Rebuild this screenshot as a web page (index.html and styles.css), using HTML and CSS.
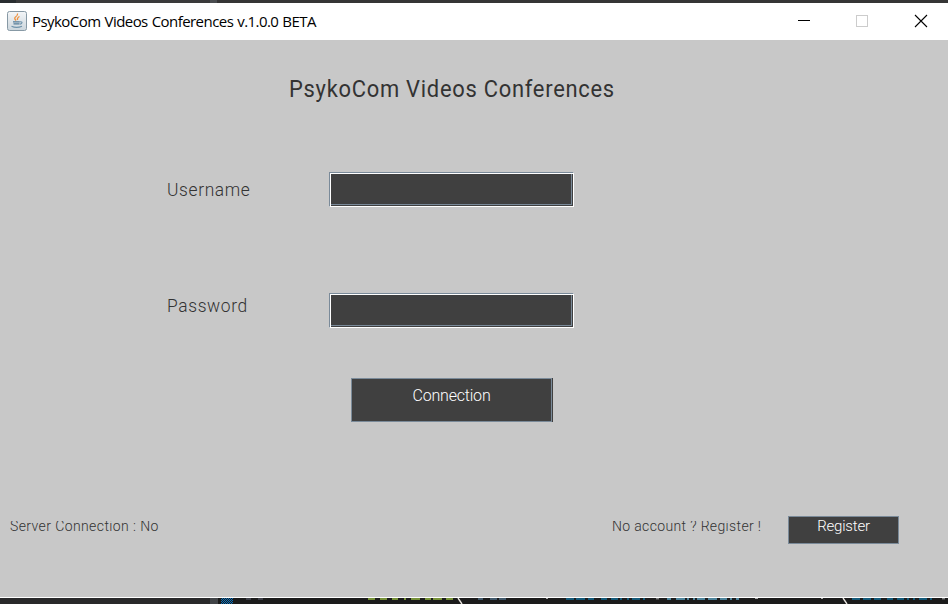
FILE: index.html
```html
<!DOCTYPE html>
<html lang="en">
<head>
<meta charset="utf-8">
<title>PsykoCom Videos Conferences</title>
<link rel="stylesheet" href="styles.css">
</head>
<body>
<div class="backdrop-top"></div>
<header class="titlebar">
  <svg class="app-icon" width="20" height="20" viewBox="0 0 20 20">
    <defs><linearGradient id="g" x1="0" y1="0" x2="0" y2="1"><stop offset="0" stop-color="#f4f6f8"/><stop offset="1" stop-color="#cbd5dc"/></linearGradient></defs>
    <rect x=".5" y=".5" width="19" height="19" rx="2" fill="url(#g)" stroke="#8799a5"/>
    <path d="M10.500 2.500Q11 4.500 8.800 5.800T9 9.500M12.500 5.500Q10 6.500 10.500 9" fill="none" stroke="#ef913d" stroke-width="1.300"/>
    <path d="M6 10.800H12.800M6.500 12.800H12.500" fill="none" stroke="#557c98" stroke-width="1.300"/>
    <path d="M13 10.800Q16 10.500 14.500 12.500L12.800 13.300M4.500 15.200Q9.500 17.500 15 15.200" fill="none" stroke="#6f93ab" stroke-width="1.200"/>
  </svg>
  <span class="window-title">PsykoCom Videos Conferences v.1.0.0 BETA</span>
  <svg class="controls" width="130" height="14" viewBox="0 0 130 14" fill="none">
    <path d="M0 10.500H12" stroke="#000"/>
    <rect x="58.500" y="5.500" width="11" height="11" stroke="#ccc"/>
    <path d="M117 5L129 17M129 5L117 17" stroke="#000" stroke-width="1.100"/>
  </svg>
</header>
<main class="content">
  <h1 class="heading">PsykoCom Videos Conferences</h1>
  <div class="row user-row"><label class="label" for="u"><span class="narrow">Username</span></label><input class="field user-field" id="u"></div>
  <div class="row pass-row"><label class="label" for="p"><span class="narrow">Password</span></label><input class="field" id="p" type="password"></div>
  <button class="connect">Connection</button>
  <footer class="footer">
    <span class="note status"><span class="note-text">Server Connection : No</span></span>
    <span class="note account"><span class="note-text">No account ? Register !</span></span>
    <button class="register">Register</button>
  </footer>
</main>
<div class="backdrop-bottom">
  <svg class="backdrop-art" width="948" height="6" viewBox="0 0 948 6" fill="none">
    <defs><pattern id="c" width="2" height="2" patternUnits="userSpaceOnUse"><path d="M0 .5H1M1 1.500H2" stroke="#0870bd"/></pattern></defs>
    <rect width="218" height="6" fill="#29292a"/><rect x="210" width="8" height="6" fill="#414447"/>
    <rect x="221" width="12" height="6" fill="url(#c)"/>
    <path d="M246 1h5M258 1h5" stroke="#606575"/>
    <path d="M368 1h7M380 1h7M392 1h6M404 1h2M411 1h9M425 1h6M433 1h9M446 1h7" stroke="#95b943" stroke-width="1.500"/>
    <path d="M458 0L462 6M843 0L847 6" stroke="#e8e4df" stroke-width="1.400"/>
    <path d="M478 1h5M490 1h7M499 1h7" stroke="#506f86" stroke-width="1.400"/>
    <path d="M566 1h8M576 1h9M588 1h6M601 1h6M611 1h7M620 1h2M627 1h2M632 1h8M643 1h2M852 1h8M863 1h8M874 1h7M887 1h6M897 1h7M907 1h2M913 1h2M919 1h8M930 1h2" stroke="#147099" stroke-width="1.600"/>
    <path d="M667 1h4M676 1h9M687 1h2M693 1h2M697 1h8M708 1h9M720 1h7M730 1h2M736 1h3" stroke="#60a7c5" stroke-width="1.600"/>
    <path d="M546 .5h2M656 .8h3M755 .5h3M821 .5h2M942 .8h3" stroke="#aaa"/>
  </svg>
</div>
</body>
</html>
```
FILE: styles.css
```css
* { box-sizing: border-box; }
body {
  margin: 0;
  width: 948px;
  height: 604px;
  overflow: hidden;
  background: #c8c8c8;
  font-family: Roboto, "Liberation Sans", sans-serif;
  font-weight: 300;
  color: #333;
}
.backdrop-top { height: 3px; background: linear-gradient(90deg, #292d30 16px, #3a3a3b 16px 210px, #4a4d50 210px 217px, #353535 217px); }
.backdrop-bottom { height: 6px; background: #1b1b1b; }
.backdrop-art { display: block; }
.titlebar { display: flex; height: 37px; padding-left: 7px; background: #fff; }
.app-icon { margin-top: 8px; }
.window-title {
  margin-left: 5px;
  width: 285px;
  font: 400 15px/37px "Open Sans", sans-serif;
  letter-spacing: -0.55px;
  word-spacing: 0.6px;
  color: #000;
  white-space: nowrap;
}
.controls { margin: 7px 20px 0 auto; overflow: visible; }
.content { height: 558px; padding-top: 35px; border-bottom: 1px solid #fff; }
.heading {
  margin: 0 0 0 289px;
  font-size: 24px;
  font-weight: 400;
  line-height: 28px;
  letter-spacing: 0.8px;
  white-space: nowrap;
  transform: scaleX(0.913);
  transform-origin: 0 0;
}
.row { display: flex; height: 35px; padding-left: 167px; }
.user-row { margin-top: 69px; }
.pass-row { margin-top: 86px; }
.label { width: 162px; font-size: 19px; line-height: 35px; letter-spacing: 0.7px; }
.narrow { display: inline-block; transform: scaleX(0.915); transform-origin: 0 0; }
.pass-row .label { line-height: 25px; }
.field {
  width: 245px;
  height: 35px;
  padding: 0 6px;
  border: 1px solid #fff;
  border-top-color: #7a8a99;
  border-left-color: #7a8a99;
  border-radius: 0;
  outline: none;
  background: #404040;
  color: #fff;
  box-shadow: inset 1px 1px #fff, inset -1px -1px #404040, inset -2px -2px #7a8a99;
}
.connect, .register {
  display: block;
  padding: 0;
  border: 1px solid #7a8a99;
  border-radius: 0;
  background: #404040;
  color: #fff;
  font-family: inherit;
  font-weight: 300;
}
.connect {
  width: 201px;
  height: 44px;
  margin: 50px 0 0 351px;
  padding-bottom: 9px;
  font-size: 16px;
  letter-spacing: -0.2px;
  box-shadow: 1px 0 #404040;
}
.footer { display: flex; margin-top: 94px; padding-left: 10px; }
.note { height: 18px; margin-top: 5px; overflow: hidden; font-size: 14px; line-height: 18px; white-space: nowrap; }
.note-text { display: block; margin-top: -4px; }
.status { width: 602px; letter-spacing: 0.4px; }
.account { width: 176px; letter-spacing: 0.35px; }
.register { width: 111px; height: 28px; padding-bottom: 8px; font-size: 15px; letter-spacing: -0.2px; }
```
